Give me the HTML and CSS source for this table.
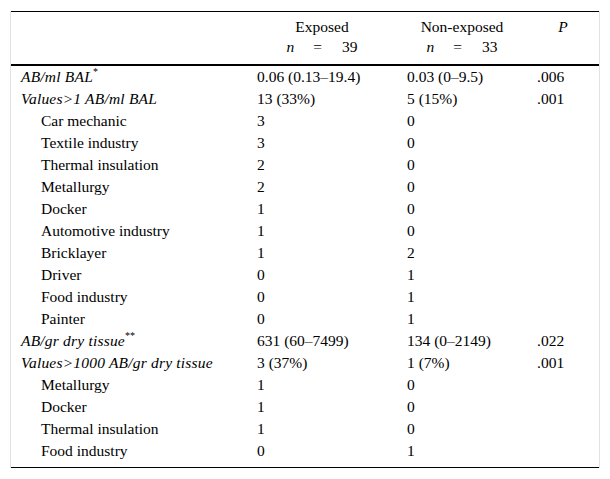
FILE: index.html
```html
<!DOCTYPE html>
<html>
<head>
<meta charset="utf-8">
<link rel="stylesheet" href="styles.css">
</head>
<body>
<div class="frame">
<table class="data">
<thead>
<tr>
<th class="c1"></th>
<th class="c2"><div>Exposed</div><div class="n"><i>n</i><span class="eq">=</span>39</div></th>
<th class="c3"><div>Non-exposed</div><div class="n"><i>n</i><span class="eq">=</span>33</div></th>
<th class="c4"><div><i>P</i></div><div class="n">&nbsp;</div></th>
</tr>
</thead>
<tbody>
<tr><td class="lab"><i>AB/ml BAL</i><sup>*</sup></td><td>0.06 (0.13–19.4)</td><td>0.03 (0–9.5)</td><td>.006</td></tr>
<tr><td class="lab"><i>Values&gt;1 AB/ml BAL</i></td><td>13 (33%)</td><td>5 (15%)</td><td>.001</td></tr>
<tr><td class="sub">Car mechanic</td><td>3</td><td>0</td><td></td></tr>
<tr><td class="sub">Textile industry</td><td>3</td><td>0</td><td></td></tr>
<tr><td class="sub">Thermal insulation</td><td>2</td><td>0</td><td></td></tr>
<tr><td class="sub">Metallurgy</td><td>2</td><td>0</td><td></td></tr>
<tr><td class="sub">Docker</td><td>1</td><td>0</td><td></td></tr>
<tr><td class="sub">Automotive industry</td><td>1</td><td>0</td><td></td></tr>
<tr><td class="sub">Bricklayer</td><td>1</td><td>2</td><td></td></tr>
<tr><td class="sub">Driver</td><td>0</td><td>1</td><td></td></tr>
<tr><td class="sub">Food industry</td><td>0</td><td>1</td><td></td></tr>
<tr><td class="sub">Painter</td><td>0</td><td>1</td><td></td></tr>
<tr><td class="lab"><i>AB/gr dry tissue</i><sup>**</sup></td><td>631 (60–7499)</td><td>134 (0–2149)</td><td>.022</td></tr>
<tr><td class="lab"><i>Values&gt;1000 AB/gr dry tissue</i></td><td>3 (37%)</td><td>1 (7%)</td><td>.001</td></tr>
<tr><td class="sub">Metallurgy</td><td>1</td><td>0</td><td></td></tr>
<tr><td class="sub">Docker</td><td>1</td><td>0</td><td></td></tr>
<tr><td class="sub">Thermal insulation</td><td>1</td><td>0</td><td></td></tr>
<tr class="last"><td class="sub">Food industry</td><td>0</td><td>1</td><td></td></tr>
</tbody>
</table>
</div>
</body>
</html>
```
FILE: styles.css
```css
html, body {
  margin: 0;
  padding: 0;
  background: #fff;
}
body {
  font-family: "Liberation Serif", "Times New Roman", serif;
  font-size: 15.5px;
  color: #000;
}
.frame {
  margin: 11px 0 0 10px;
  width: 590px;
  box-sizing: border-box;
  border-left: 1px solid #e2e2e2;
  border-right: 1px solid #e2e2e2;
}
.data {
  width: 100%;
  border-collapse: collapse;
  border-top: 1px solid #000;
  border-bottom: 1px solid #000;
}
.data thead tr {
  border-bottom: 2px solid #000;
}
.data th {
  font-weight: normal;
  text-align: center;
  padding: 5px 10px 7px;
  line-height: 20px;
  vertical-align: top;
}
.c1 { width: 216px; }
.c2 { width: 130px; }
.c3 { width: 110px; }
.n i { margin-right: 19px; }
.eq { margin-right: 20px; }
.data td {
  padding: 0 10px;
  height: 22px;
  line-height: 22px;
  vertical-align: middle;
  white-space: nowrap;
}
.data td i {
  letter-spacing: 0.2px;
}
.data td.sub {
  padding-left: 30px;
}
.data sup {
  font-size: 10px;
  line-height: 0;
  vertical-align: 7px;
}
.data tr.last td {
  padding-bottom: 5px;
}
```
